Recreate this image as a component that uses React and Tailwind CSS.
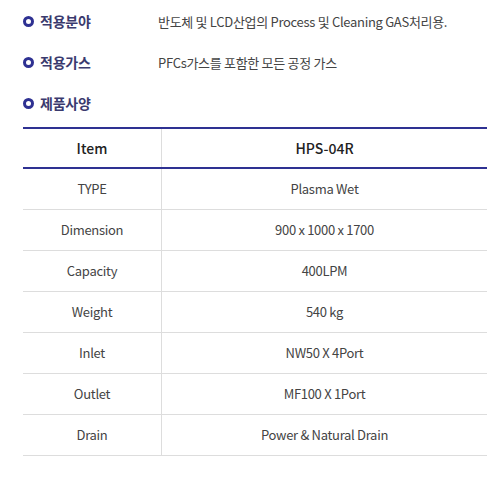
import React from "react";

const FONT = { fontFamily: '"Noto Sans CJK KR", "Noto Sans", sans-serif' };

const info = [
    { label: '적용분야', value: '반도체 및 LCD산업의 Process 및 Cleaning GAS처리용.' },
    { label: '적용가스', value: 'PFCs가스를 포함한 모든 공정 가스' },
    { label: '제품사양', value: '' },
];

const specs = [
    ['TYPE', 'Plasma Wet'],
    ['Dimension', '900 x 1000 x 1700'],
    ['Capacity', '400LPM'],
    ['Weight', '540 kg'],
    ['Inlet', 'NW50 X 4Port'],
    ['Outlet', 'MF100 X 1Port'],
    ['Drain', 'Power & Natural Drain'],
];

const Bullet = () => (
    <span className="w-[11px] h-[11px] rounded-full border-[3px] border-[#2e3192] mr-[6px] shrink-0" />
);

const App = () => {
    return (
        <div className="w-[499px] h-[479px] bg-white pt-[1px]" style={FONT}>
            {info.map((row) => (
                <div key={row.label} className="flex items-center h-[41px] pl-[23px]">
                    <Bullet />
                    <span className="w-[118px] text-[14px] font-bold text-[#3a3a6e] tracking-[-0.2px]">{row.label}</span>
                    <span className="text-[13px] text-[#444] tracking-[-0.3px]">{row.value}</span>
                </div>
            ))}
            <div className="mx-[23px] mt-[3px] w-[464px] border-t-2 border-[#2e3192]">
                <div className="flex h-[40px] border-b-2 border-[#2e3192] text-[14px] font-medium text-[#222]">
                    <div className="w-[139px] flex items-center justify-center border-r border-[#ddd]">Item</div>
                    <div className="flex-1 flex items-center justify-center">HPS-04R</div>
                </div>
                {specs.map(([k, v]) => (
                    <div key={k} className="flex h-[41px] border-b border-[#ddd] text-[13px] text-[#444] tracking-[-0.3px]">
                        <div className="w-[139px] flex items-center justify-center border-r border-[#ddd]">{k}</div>
                        <div className="flex-1 flex items-center justify-center">{v}</div>
                    </div>
                ))}
            </div>
        </div>
    );
};

export default App;
